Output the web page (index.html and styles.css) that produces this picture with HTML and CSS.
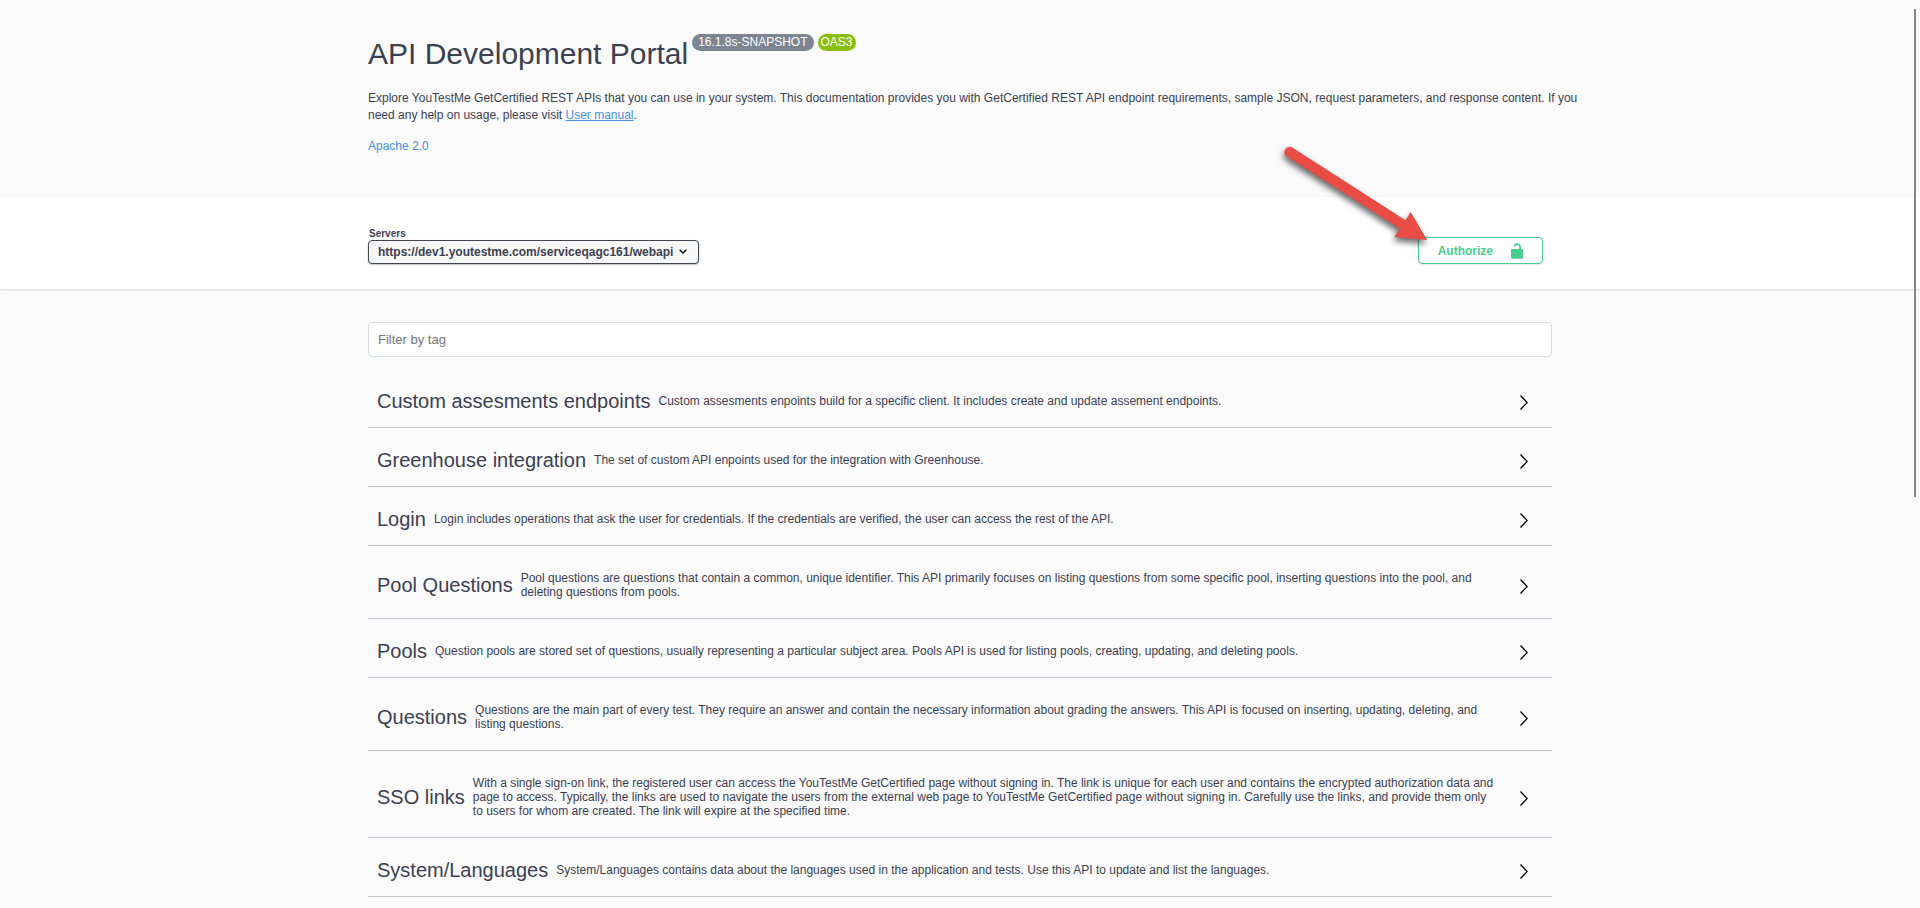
FILE: index.html
```
<!DOCTYPE html>
<html lang="en">
<head>
    <meta charset="UTF-8">
    <meta name="viewport" content="width=device-width, initial-scale=1.0">
    <title>API Development Portal</title>
    <link rel="stylesheet" href="styles.css">
</head>
<body>
    <svg class="icon-defs" aria-hidden="true">
        <symbol id="chevron" viewBox="0 0 8 15">
            <path d="M0.5 0.5 L7.2 7.5 L0.5 14.5" fill="none" stroke="currentColor" stroke-width="1.3"/>
        </symbol>
    </svg>

    <header class="info">
        <div class="wrapper">
            <div class="title">
                <h1>API Development Portal</h1>
                <span class="badge">16.1.8s-SNAPSHOT</span>
                <span class="badge badge-oas">OAS3</span>
            </div>
            <p class="description">Explore YouTestMe GetCertified REST APIs that you can use in your system. This documentation provides you with GetCertified REST API endpoint requirements, sample JSON, request parameters, and response content. If you need any help on usage, please visit <a href="#manual">User manual</a>.</p>
            <a class="license" href="#license">Apache 2.0</a>
        </div>
    </header>

    <section class="scheme">
        <div class="wrapper scheme-row">
            <div class="servers">
                <label for="servers">Servers</label>
                <div class="select-box">
                    <select id="servers">
                        <option>https://dev1.youtestme.com/serviceqagc161/webapi</option>
                    </select>
                    <svg class="select-arrow" viewBox="0 0 8 5" aria-hidden="true">
                        <path d="M0.7 0.7 L4 4 L7.3 0.7" fill="none" stroke="#000" stroke-width="1.4"/>
                    </svg>
                </div>
            </div>
            <div class="auth">
                <button class="authorize" type="button">
                    <span>Authorize</span>
                    <svg class="lock" viewBox="0 0 12 16" aria-hidden="true">
                        <path d="M10 6V4.2C10 1.6 8.4 0.3 6.2 0.3C4.2 0.3 2.8 1.5 2.6 3.6H4.3C4.4 2.5 5.1 1.9 6.2 1.9C7.5 1.9 8.3 2.7 8.3 4.2V6H1.2C0.5 6 0 6.6 0 7.2V14.2C0 15 0.8 15.7 1.6 15.7H10.4C11.2 15.7 12 15 12 14.2V7.2C12 6.6 11.5 6 10.8 6Z" fill="currentColor"/>
                    </svg>
                </button>
                <!-- red pointer over the authorize button -->
                <svg class="pointer" viewBox="0 0 160 115" aria-hidden="true">
                    <path d="M15.5 11 L129.5 84.2 L134.7 76 L151 104 L118.5 101 L123.5 92.5 L9.5 19.5 A5.5 5.5 0 0 1 15.5 11 Z" fill="#e94b45"/>
                </svg>
            </div>
        </div>
    </section>

    <main class="wrapper">
        <input class="filter" type="text" placeholder="Filter by tag" aria-label="Filter by tag">

        <section class="tag">
            <h2>Custom assesments endpoints</h2>
            <p>Custom assesments enpoints build for a specific client. It includes create and update assement endpoints.</p>
            <button type="button" aria-label="Expand Custom assesments endpoints"><svg><use href="#chevron"/></svg></button>
        </section>
        <section class="tag">
            <h2>Greenhouse integration</h2>
            <p>The set of custom API enpoints used for the integration with Greenhouse.</p>
            <button type="button" aria-label="Expand Greenhouse integration"><svg><use href="#chevron"/></svg></button>
        </section>
        <section class="tag">
            <h2>Login</h2>
            <p>Login includes operations that ask the user for credentials. If the credentials are verified, the user can access the rest of the API.</p>
            <button type="button" aria-label="Expand Login"><svg><use href="#chevron"/></svg></button>
        </section>
        <section class="tag">
            <h2>Pool Questions</h2>
            <p>Pool questions are questions that contain a common, unique identifier. This API primarily focuses on listing questions from some specific pool, inserting questions into the pool, and deleting questions from pools.</p>
            <button type="button" aria-label="Expand Pool Questions"><svg><use href="#chevron"/></svg></button>
        </section>
        <section class="tag">
            <h2>Pools</h2>
            <p>Question pools are stored set of questions, usually representing a particular subject area. Pools API is used for listing pools, creating, updating, and deleting pools.</p>
            <button type="button" aria-label="Expand Pools"><svg><use href="#chevron"/></svg></button>
        </section>
        <section class="tag">
            <h2>Questions</h2>
            <p>Questions are the main part of every test. They require an answer and contain the necessary information about grading the answers. This API is focused on inserting, updating, deleting, and listing questions.</p>
            <button type="button" aria-label="Expand Questions"><svg><use href="#chevron"/></svg></button>
        </section>
        <section class="tag">
            <h2>SSO links</h2>
            <p>With a single sign-on link, the registered user can access the YouTestMe GetCertified page without signing in. The link is unique for each user and contains the encrypted authorization data and page to access. Typically, the links are used to navigate the users from the external web page to YouTestMe GetCertified page without signing in. Carefully use the links, and provide them only to users for whom are created. The link will expire at the specified time.</p>
            <button type="button" aria-label="Expand SSO links"><svg><use href="#chevron"/></svg></button>
        </section>
        <section class="tag">
            <h2>System/Languages</h2>
            <p>System/Languages contains data about the languages used in the application and tests. Use this API to update and list the languages.</p>
            <button type="button" aria-label="Expand System/Languages"><svg><use href="#chevron"/></svg></button>
        </section>
    </main>

    <div class="scroll-thumb"></div>
</body>
</html>
```
FILE: styles.css
```
* {
    box-sizing: border-box;
}
body {
    margin: 0;
    background-color: #fafafa;
    color: #3b4151;
    font-family: Arial, "Liberation Sans", sans-serif;
    font-size: 12px;
}
h1, h2, p {
    margin: 0;
    font-weight: normal;
}
a {
    color: #4990e2;
}
.icon-defs {
    display: none;
}
.wrapper {
    max-width: 1216px;
    margin: 0 auto;
    padding: 0 16px;
}

/* header */
.info {
    padding: 34px 0 42px;
}
.title {
    display: flex;
    align-items: flex-start;
    gap: 4px;
}
.title h1 {
    font-size: 30px;
    line-height: 40px;
}
.badge {
    padding: 0 6px;
    border-radius: 9px;
    background-color: #7d8492;
    color: #fff;
    line-height: 17px;
}
.badge-oas {
    padding: 0 3px;
    background-color: #89bf04;
}
.description {
    margin: 16px -36px 14px 0;
    line-height: 17px;
}
.license {
    display: block;
    line-height: 17px;
    text-decoration: none;
}

/* servers + authorize */
.scheme {
    padding: 30px 0 25px;
    background-color: #fff;
    box-shadow: 0 1px 2px rgba(0, 0, 0, 0.15);
}
.scheme-row {
    display: flex;
    justify-content: space-between;
    align-items: flex-end;
}
.servers label {
    display: block;
    padding-left: 1px;
    font-size: 10px;
    font-weight: bold;
    line-height: 13px;
}
.select-box {
    position: relative;
}
.select-box select {
    display: block;
    appearance: none;
    height: 24px;
    padding: 0 24px 0 9px;
    border: 1px solid #41444e;
    border-radius: 4px;
    background-color: #f7f7f7;
    box-shadow: 0 1px 2px rgba(0, 0, 0, 0.25);
    color: #3b4151;
    font-family: inherit;
    font-size: 12px;
    font-weight: bold;
}
.select-arrow {
    position: absolute;
    top: 9px;
    right: 12px;
    width: 8px;
    height: 5px;
}
.auth {
    position: relative;
    margin-right: 9px;
}
.authorize {
    display: flex;
    align-items: center;
    gap: 18px;
    height: 27px;
    padding: 0 19px;
    border: 1px solid #49cc90;
    border-radius: 4px;
    background: none;
    box-shadow: 0 1px 2px rgba(0, 0, 0, 0.1);
    color: #49cc90;
    font-family: inherit;
    font-size: 12px;
    font-weight: bold;
}
.lock {
    width: 12px;
    height: 16px;
}
.pointer {
    position: absolute;
    top: -101px;
    left: -142px;
    width: 160px;
    height: 115px;
    overflow: visible;
    filter: drop-shadow(-1px 4px 3px rgba(0, 0, 0, 0.6));
    pointer-events: none;
}

/* tag list */
.filter {
    display: block;
    width: 100%;
    height: 35px;
    margin: 33px 0 12px;
    padding: 0 9px;
    border: 1px solid #d8dde7;
    border-radius: 4px;
    background-color: #fff;
    font-family: inherit;
    font-size: 13px;
}
.filter::placeholder {
    color: #757575;
}
.tag {
    display: flex;
    align-items: center;
    padding: 8px 24px 2px 9px;
    border-bottom: 1px solid #c0c2c7;
}
.tag h2 {
    flex: none;
    font-size: 20px;
    line-height: 24px;
}
.tag p {
    flex: 1;
    padding: 17px 8px;
    line-height: 14px;
}
.tag button {
    display: flex;
    margin-left: 16px;
    padding: 2px 0 0;
    border: none;
    background: none;
    color: #000;
}
.tag svg {
    width: 8px;
    height: 15px;
}

.scroll-thumb {
    position: absolute;
    top: 9px;
    right: 4px;
    width: 2px;
    height: 488px;
    background-color: #858585;
}
```
